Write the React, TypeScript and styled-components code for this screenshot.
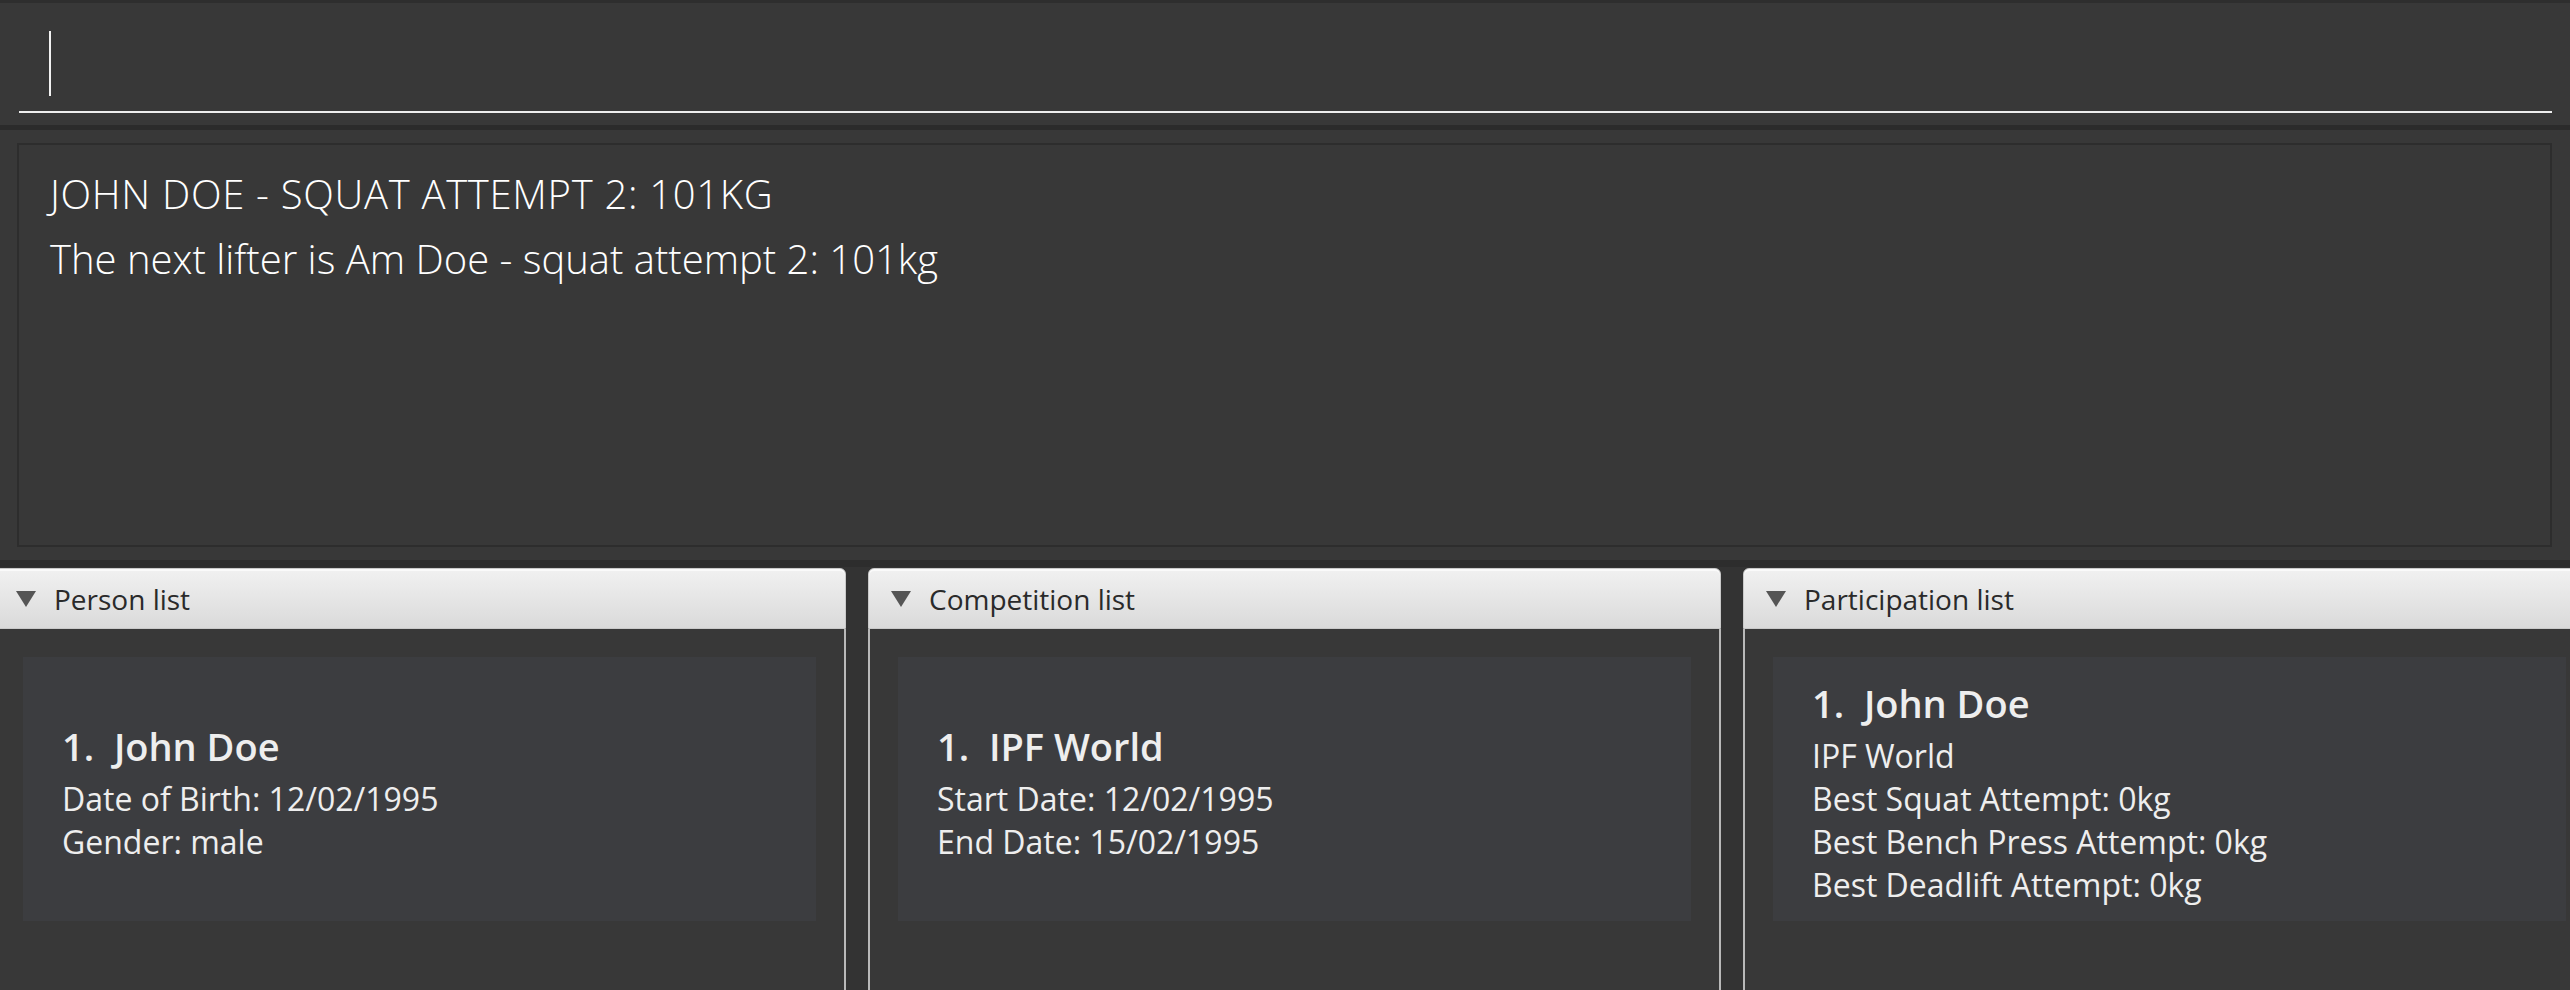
import styled, { createGlobalStyle } from "styled-components";

const GlobalStyle = createGlobalStyle`
  html, body {
    margin: 0;
    padding: 0;
    background: #383838;
  }
  body {
    font-family: "Open Sans", "Noto Sans", sans-serif;
    overflow: hidden;
  }
`;

const Window = styled.div`
  width: 2570px;
  height: 990px;
  display: flex;
  flex-direction: column;
  background: #383838;
  overflow: hidden;
`;

const CommandBar = styled.div`
  height: 122px;
  border-top: 3px solid #2e2e2e;
  padding: 0 18px 0 19px;
`;

const CommandField = styled.div`
  height: 80px;
  padding: 28px 0 0 30px;
  border-bottom: 2px solid #eeeeee;
`;

const Caret = styled.div`
  width: 2px;
  height: 65px;
  background: #f2f2f2;
`;

const Divider = styled.div`
  height: 5px;
  background: #2b2b2b;
`;

const ResultArea = styled.div`
  height: 437px;
  padding: 13px 18px 0 17px;
  border-bottom: 7px solid #2d2d2d;
  box-sizing: border-box;
`;

const ResultBox = styled.div`
  height: 404px;
  box-sizing: border-box;
  border: 2px solid #2d2d2d;
  padding: 16px 31px;
  color: #ffffff;
  font-weight: 300;
  font-size: 40px;
  line-height: 65px;
`;

const ResultLine = styled.div<{ $caps?: boolean }>`
  white-space: pre;
  letter-spacing: ${({ $caps }) => ($caps ? "0.7px" : "0")};
`;

const PanelRow = styled.div`
  flex: 1;
  display: flex;
  gap: 22px;
  margin-left: -7px;
  padding-top: 1px;
  background: #333333;
`;

const Panel = styled.section`
  flex: 0 0 853px;
  display: flex;
  flex-direction: column;
`;

const TitleBar = styled.div`
  height: 61px;
  box-sizing: border-box;
  display: flex;
  align-items: center;
  gap: 18px;
  padding-left: 22px;
  border: 1px solid #c9c9c9;
  border-radius: 6px 6px 0 0;
  background: linear-gradient(#f1f1f1, #dadada);
  box-shadow: inset 0 2px 0 #fafafa;
  color: #2a2a2a;
  font-size: 28px;
`;

const Arrow = styled.span`
  width: 0;
  height: 0;
  border-left: 10px solid transparent;
  border-right: 10px solid transparent;
  border-top: 16px solid #555555;
`;

const PanelBody = styled.div`
  flex: 1;
  background: #383838;
  border-left: 2px solid #b9b9b9;
  border-right: 2px solid #b9b9b9;
  padding: 28px 28px 0;
`;

const Card = styled.div`
  height: 264px;
  background: #3c3d40;
  display: flex;
  flex-direction: column;
  justify-content: center;
  padding-left: 39px;
  color: #eeeeee;
`;

const CardName = styled.div`
  font-size: 38px;
  font-weight: 600;
  line-height: 62px;
  white-space: pre;
`;

const CardLine = styled.div`
  font-size: 32px;
  line-height: 43px;
`;

type ListCard = { title: string; name: string; lines: string[] };

const panels: ListCard[] = [
  {
    title: "Person list",
    name: "1.  John Doe",
    lines: ["Date of Birth: 12/02/1995", "Gender: male"],
  },
  {
    title: "Competition list",
    name: "1.  IPF World",
    lines: ["Start Date: 12/02/1995", "End Date: 15/02/1995"],
  },
  {
    title: "Participation list",
    name: "1.  John Doe",
    lines: [
      "IPF World",
      "Best Squat Attempt: 0kg",
      "Best Bench Press Attempt: 0kg",
      "Best Deadlift Attempt: 0kg",
    ],
  },
];

const App = () => {
  return (
    <>
      <GlobalStyle />
      <Window>
        <CommandBar>
          <CommandField>
            <Caret />
          </CommandField>
        </CommandBar>
        <Divider />
        <ResultArea>
          <ResultBox>
            <ResultLine $caps>JOHN DOE - SQUAT ATTEMPT 2: 101KG</ResultLine>
            <ResultLine>The next lifter is Am Doe - squat attempt 2: 101kg</ResultLine>
          </ResultBox>
        </ResultArea>
        <PanelRow>
          {panels.map((p) => (
            <Panel key={p.title}>
              <TitleBar>
                <Arrow />
                {p.title}
              </TitleBar>
              <PanelBody>
                <Card>
                  <CardName>{p.name}</CardName>
                  {p.lines.map((l) => (
                    <CardLine key={l}>{l}</CardLine>
                  ))}
                </Card>
              </PanelBody>
            </Panel>
          ))}
        </PanelRow>
      </Window>
    </>
  );
};

export default App;
